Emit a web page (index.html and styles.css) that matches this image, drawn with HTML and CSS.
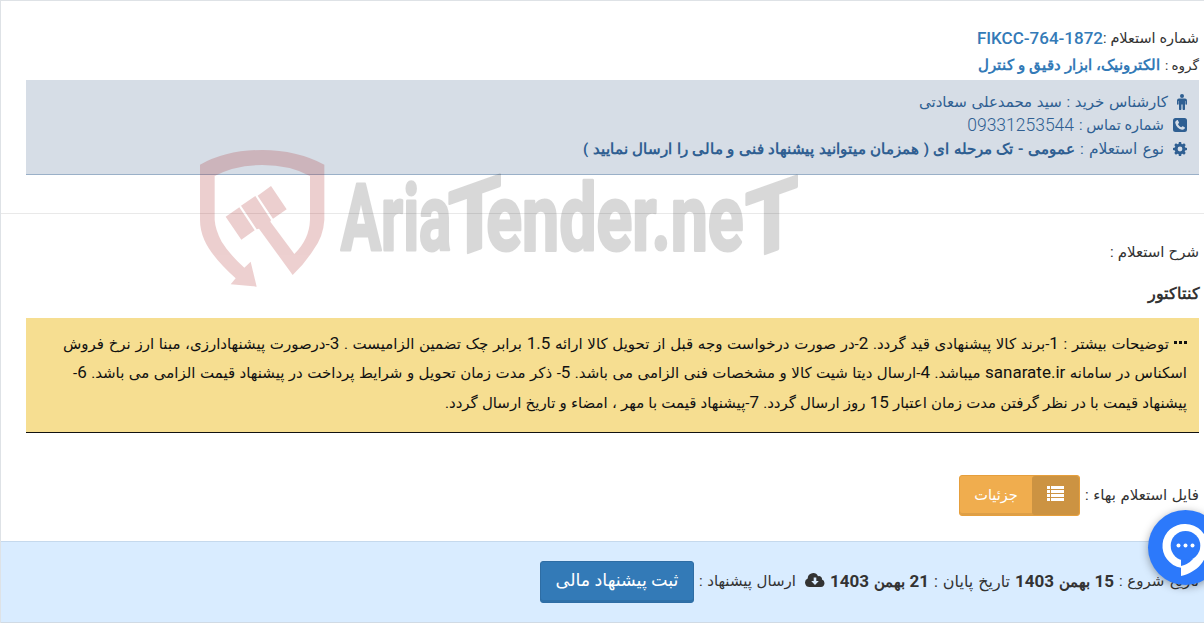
FILE: index.html
```
<!DOCTYPE html>
<html lang="fa" dir="rtl">
<head>
    <meta charset="UTF-8">
    <meta name="viewport" content="width=device-width, initial-scale=1.0">
    <title>استعلام بهاء</title>
    <link rel="stylesheet" href="styles.css">
</head>
<body>

    <div class="panel">
        <div class="info">
            <div class="row number"><span class="fit w-number">شماره استعلام :</span><a class="code">FIKCC-764-1872</a></div>
            <div class="row group"><span class="fit w-group">گروه :</span><a class="fit bold w-title">الکترونیک، ابزار دقیق و کنترل</a></div>

            <div class="contact">
                <div class="row">
                    <svg class="icon-man" viewBox="0 0 10 16"><circle cx="5" cy="2" r="2"/><path d="M2 4.500h6a2 2 0 0 1 2 2V10a.8.8 0 0 1-1.600 0V7H8v8a1 1 0 0 1-2.400 0v-4.500H4.400V15A1 1 0 0 1 2 15V7h-.4v3A.8.8 0 0 1 0 10V6.500a2 2 0 0 1 2-2z"/></svg>
                    <span class="fit w-buyer">کارشناس خرید : سید محمدعلی سعادتی</span>
                </div>
                <div class="row">
                    <svg class="icon" viewBox="0 0 14 14"><path fill-rule="evenodd" d="M2.500 0h9A2.500 2.500 0 0 1 14 2.500v9a2.500 2.500 0 0 1-2.500 2.500h-9A2.500 2.500 0 0 1 0 11.500v-9A2.500 2.500 0 0 1 2.500 0zM4 2.200C2.700 2.800 2 3.800 2.300 5.100 3 8.600 5.700 11.200 9 11.800c1.300.2 2.500-.5 2.900-1.700.1-.4.1-.7-.3-.9L9.800 8.200c-.3-.1-.5-.1-.7.2l-.8.9C6.800 8.600 5.600 7.400 4.900 6l.9-.8c.3-.2.3-.4.2-.7L5 2.600c-.3-.5-.6-.6-1-.4z"/></svg>
                    <span class="fit w-phone">شماره تماس :</span>
                    <span class="phone">09331253544</span>
                </div>
                <div class="row">
                    <svg class="icon" viewBox="0 0 14 14"><path fill-rule="evenodd" d="M5.900 0h2.200l.4 1.900 1 .4L11.100 1.300l1.600 1.600-1 1.600.4 1 1.900.4v2.200l-1.900.4-.4 1 1 1.600-1.600 1.600-1.600-1-1 .4L8.100 14H5.900l-.4-1.900-1-.4-1.600 1-1.600-1.600 1-1.600-.4-1L0 8.100V5.900l1.900-.4.4-1-1-1.600 1.600-1.600 1.600 1 1-.4zM7 4.600a2.400 2.400 0 1 0 0 4.800 2.400 2.400 0 0 0 0-4.800z"/></svg>
                    <span class="fit w-kind">نوع استعلام :</span>
                    <span class="fit bold w-type">عمومی - تک مرحله ای ( همزمان میتوانید پیشنهاد فنی و مالی را ارسال نمایید )</span>
                </div>
            </div>
        </div>

        <div class="details">
            <div class="row"><span class="fit w-desc">شرح استعلام :</span></div>
            <div class="row product">کنتاکتور</div>

            <div class="notes">
                <div class="row">
                    <span class="dots"><i></i><i></i><i></i></span>
                    <span class="fit w-note1">توضیحات بیشتر : <span class="num">1</span>-برند کالا پیشنهادی قید گردد. <span class="num">2</span>-در صورت درخواست وجه قبل از تحویل کالا ارائه <span class="num">1.5</span> برابر چک تضمین الزامیست . <span class="num">3</span>-درصورت پیشنهادارزی، مبنا ارز نرخ فروش</span>
                </div>
                <div class="row"><span class="fit w-note2">اسکناس در سامانه <span class="num">sanarate.ir</span> میباشد. <span class="num">4</span>-ارسال دیتا شیت کالا و مشخصات فنی الزامی می باشد. <span class="num">5</span>- ذکر مدت زمان تحویل و شرایط پرداخت در پیشنهاد قیمت الزامی می باشد. <span class="num">6</span>-</span></div>
                <div class="row"><span class="fit w-note3">پیشنهاد قیمت با در نظر گرفتن مدت زمان اعتبار <span class="num">15</span> روز ارسال گردد. <span class="num">7</span>-پیشنهاد قیمت با مهر ، امضاء و تاریخ ارسال گردد.</span></div>
            </div>

            <div class="row file">
                <span class="fit w-file">فایل استعلام بهاء :</span>
                <button class="btn btn-warning">
                    <span class="btn-label"><svg class="icon-list" viewBox="0 0 17 15"><path d="M0 0h3v3H0zM4 0h13v3H4zM0 4h3v3H0zM4 4h13v3H4zM0 8h3v3H0zM4 8h13v3H4zM0 12h3v3H0zM4 12h13v3H4z"/></svg></span>
                    <span class="btn-text">جزئیات</span>
                </button>
            </div>
        </div>

        <div class="row footer">
            <span class="fit w-start">تاریخ شروع :</span>
            <span class="fit bold w-date"><span class="num">15</span> بهمن <span class="num">1403</span></span>
            <span class="fit w-end">تاریخ پایان :</span>
            <span class="fit bold w-date"><span class="num">21</span> بهمن <span class="num">1403</span></span>
            <svg class="icon-cloud" viewBox="0 0 20 14"><path fill-rule="evenodd" d="M4.500 14A4.500 4.500 0 0 1 2.700 5.400 5.400 5.400 0 0 1 13 3.300a3 3 0 0 1 4 3.200A3.900 3.900 0 0 1 16 14zM8.700 4.500v3.400H6.200L10 12l3.800-4.100h-2.500V4.500z"/></svg>
            <span class="fit w-send">ارسال پیشنهاد :</span>
            <button class="btn btn-primary">ثبت پیشنهاد مالی</button>
        </div>
    </div>

    <svg class="watermark" viewBox="0 0 1920 480">
        <g class="shield">
            <path d="M60 74Q140 30 247 30Q350 30 433 74V240Q430 290 400 330Q375 370 338 405L237 266L230 268L183 197L226 168L273 240L271 245L343 342Q388 298 390 240V108Q330 75 247 75Q165 75 104 108V240Q106 270 125 305Q150 345 193 383L212 365L230 440L152 433L167 415Q95 350 73 300Q60 270 60 240Z"/>
            <path d="M137 230L178 202L224 271L184 299ZM233 167L273 138L320 208L279 236Z"/>
        </g>
        <g class="brand">
            <text x="482" y="331" textLength="332" lengthAdjust="spacingAndGlyphs">Aria</text>
            <text transform="translate(804 359) skewY(-19.600)" textLength="160" lengthAdjust="spacingAndGlyphs">T</text>
            <text x="919" y="331" textLength="772" lengthAdjust="spacingAndGlyphs">ender.ne</text>
            <text transform="translate(1695 362) skewY(-19.600)" textLength="160" lengthAdjust="spacingAndGlyphs">T</text>
        </g>
    </svg>

    <div class="chat">
        <svg viewBox="0 0 75 75"><path class="bubble" d="M37.500 14A22 22 0 0 1 59.500 36C59.500 50 50 62 33 66V57.700A22 22 0 0 1 37.500 14z"/><circle class="hole" cx="37.500" cy="35.800" r="14.800"/><path class="hole" d="M33 49.500v6.500q7-1.500 12-7z"/><circle class="bubble" cx="30.500" cy="35.500" r="2"/><circle class="bubble" cx="37.500" cy="35.500" r="2"/><circle class="bubble" cx="44.500" cy="35.500" r="2"/></svg>
    </div>

</body>
</html>
```
FILE: styles.css
```
* {
    margin: 0;
    padding: 0;
    box-sizing: border-box;
}

body {
    height: 623px;
    overflow: hidden;
    background: #fff;
    color: #333;
    font-family: Roboto, "DejaVu Sans", sans-serif;
    font-size: 15px;
}

.panel {
    height: 623px;
    border-top: 1px solid #dee2e6;
    border-left: 1px solid #dee2e6;
}

.row {
    display: flex;
    align-items: center;
    gap: 5px;
}

/* each run of text fills the width it is given */
.fit {
    white-space: nowrap;
    text-align: justify;
    text-align-last: justify;
}

.bold {
    font-family: Roboto, "Noto Sans", sans-serif;
    font-weight: bold;
    font-size: 15px;
}

.num {
    font-size: 17px;
}

.w-number { width: 96px; font-size: 14.500px; }
.w-group { width: 34px; font-size: 13.500px; }
.w-title { width: 182px; }
.w-buyer { width: 249px; }
.w-phone { width: 85px; font-size: 14.500px; }
.w-kind { width: 84px; font-size: 15.500px; }
.w-type { width: 492px; }
.w-desc { width: 89px; }
.w-note1 { width: 1106px; }
.w-note2 { width: 1114px; }
.w-note3 { width: 742px; }
.w-file { width: 114px; }
.w-start { width: 80px; }
.w-date { width: 99px; }
.w-end { width: 76px; font-size: 16px; }
.w-send { width: 97px; }

.info {
    height: 213px;
    padding: 23px 5px 0 25px;
    border-bottom: 1px solid #e9e9e9;
}

.number {
    height: 28px;
    gap: 0;
}

.group {
    height: 28px;
    padding-bottom: 2px;
}

.info a {
    color: #337ab7;
}

.code {
    font-size: 17px;
    font-weight: 500;
}

.contact {
    height: 95px;
    padding: 10px 12px 0;
    background: #d6dde6;
    border-bottom: 1px solid #9ab0c8;
    color: #2f5f92;
}

.contact .row {
    height: 23.500px;
    gap: 5px;
}

.contact svg {
    fill: #2f5f92;
    margin-left: 4px;
}

.icon {
    width: 14px;
    height: 14px;
}

.icon-man {
    width: 10px;
    height: 16px;
}

.phone {
    font-size: 17.500px;
    font-weight: 300;
}

.details {
    height: 327px;
    padding: 24px 5px 0 25px;
}

.details > .row:first-child {
    height: 28px;
}

.product {
    height: 52px;
    padding-top: 2px;
    margin-right: -1px;
    font-family: "Noto Sans", sans-serif;
    font-size: 15.700px;
    font-weight: bold;
}

.notes {
    height: 115px;
    padding: 10px 12px 0;
    background: #f6de91;
    border-bottom: 1px solid #111;
    color: #111;
    font-size: 15px;
}

.notes .row {
    height: 29.600px;
}

.dots {
    display: flex;
    gap: 2px;
    margin-top: -1px;
}

.dots i {
    width: 3px;
    height: 3px;
    background: #111;
}

.file {
    margin-top: 42px;
}

.w-file {
    padding-bottom: 2px;
}

.btn {
    border-radius: 3px;
    color: #fff;
    font-family: Roboto, "DejaVu Sans", sans-serif;
    box-shadow: inset 0 -2px 0 rgba(0, 0, 0, 0.08);
}

.btn-warning {
    display: flex;
    width: 121px;
    height: 41px;
    border: 1px solid #e69f3c;
    background: #f0ad4e;
    font-size: 14.500px;
}

.btn-label {
    display: flex;
    align-items: center;
    justify-content: center;
    width: 47px;
    height: 39px;
    border-radius: 3px;
    background: #cc9342;
}

.btn-text {
    width: 72px;
    line-height: 39px;
}

.icon-list {
    width: 17px;
    height: 15px;
    margin-top: -4px;
    fill: #fff;
}

.footer {
    height: 82px;
    padding-right: 5px;
    background: #d9ecff;
    border-top: 1px solid #c5d9ed;
    border-bottom: 1px solid #d0dae4;
}

.footer .fit {
    padding-bottom: 2px;
}

.icon-cloud {
    width: 20px;
    height: 14px;
    margin: 0 0 4px 4px;
    fill: #333;
}

.btn-primary {
    width: 154px;
    height: 42px;
    padding-bottom: 4px;
    border: 1px solid #2e6da4;
    background: #337ab7;
    font-size: 17.500px;
}

.watermark {
    position: absolute;
    left: 180px;
    top: 140px;
    width: 640px;
    height: 160px;
    direction: ltr;
}

.shield {
    fill: #a51414;
    opacity: 0.2;
}

.brand {
    opacity: 0.15;
    stroke: #000;
    stroke-width: 9px;
    stroke-linejoin: round;
    font-family: Roboto, sans-serif;
    font-size: 280px;
    font-weight: bold;
}

.chat {
    position: absolute;
    left: 1148px;
    top: 510px;
    width: 75px;
    height: 75px;
    border-radius: 50%;
    background: #2c79fb;
    box-shadow: 0 2px 8px rgba(0, 0, 0, 0.35);
}

.bubble {
    fill: #fff;
}

.hole {
    fill: #2c79fb;
}
```
